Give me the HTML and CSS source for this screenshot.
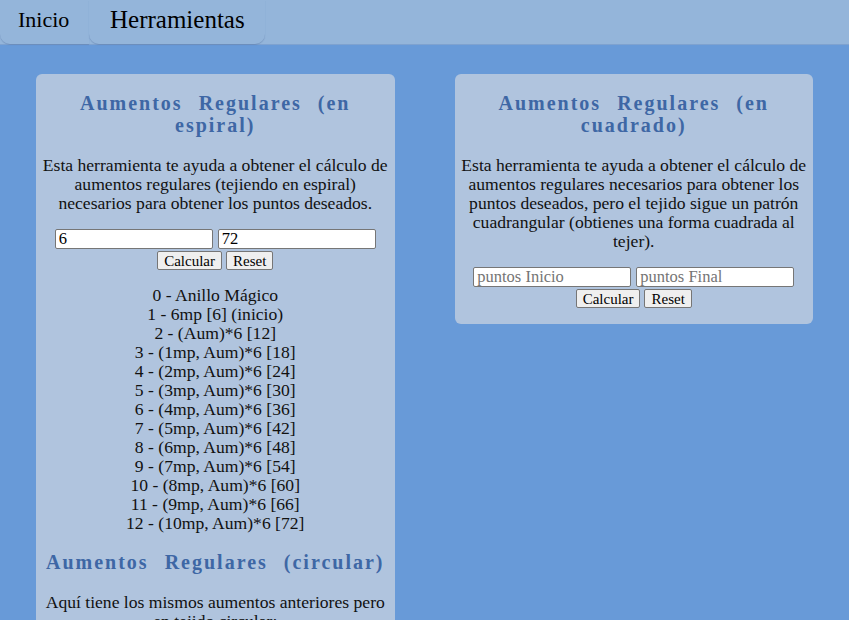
FILE: index.html
```html
<!DOCTYPE html>
<html lang="es">
<head>
<meta charset="utf-8">
<title>Herramientas</title>
<link rel="stylesheet" href="styles.css">
</head>
<body>
<nav class="tabs">
  <a class="tab tab-home" href="#">Inicio</a>
  <a class="tab tab-active" href="#">Herramientas</a>
</nav>
<main class="grid">
  <section class="card">
    <h2 class="card-title">Aumentos Regulares (en espiral)</h2>
    <p class="card-text">Esta herramienta te ayuda a obtener el cálculo de aumentos regulares (tejiendo en espiral) necesarios para obtener los puntos deseados.</p>
    <form class="calc">
      <div class="calc-inputs">
        <input class="field" type="text" value="6">
        <input class="field" type="text" value="72">
      </div>
      <div class="calc-buttons">
        <button class="btn" type="button">Calcular</button>
        <button class="btn" type="reset">Reset</button>
      </div>
    </form>
    <ul class="rows">
      <li>0 - Anillo Mágico</li>
      <li>1 - 6mp [6] (inicio)</li>
      <li>2 - (Aum)*6 [12]</li>
      <li>3 - (1mp, Aum)*6 [18]</li>
      <li>4 - (2mp, Aum)*6 [24]</li>
      <li>5 - (3mp, Aum)*6 [30]</li>
      <li>6 - (4mp, Aum)*6 [36]</li>
      <li>7 - (5mp, Aum)*6 [42]</li>
      <li>8 - (6mp, Aum)*6 [48]</li>
      <li>9 - (7mp, Aum)*6 [54]</li>
      <li>10 - (8mp, Aum)*6 [60]</li>
      <li>11 - (9mp, Aum)*6 [66]</li>
      <li>12 - (10mp, Aum)*6 [72]</li>
    </ul>
    <h2 class="card-title">Aumentos Regulares (circular)</h2>
    <p class="card-text">Aquí tiene los mismos aumentos anteriores pero en tejido circular:</p>
  </section>
  <section class="card">
    <h2 class="card-title">Aumentos Regulares (en cuadrado)</h2>
    <p class="card-text">Esta herramienta te ayuda a obtener el cálculo de aumentos regulares necesarios para obtener los puntos deseados, pero el tejido sigue un patrón cuadrangular (obtienes una forma cuadrada al tejer).</p>
    <form class="calc">
      <div class="calc-inputs">
        <input class="field" type="text" placeholder="puntos Inicio">
        <input class="field" type="text" placeholder="puntos Final">
      </div>
      <div class="calc-buttons">
        <button class="btn" type="button">Calcular</button>
        <button class="btn" type="reset">Reset</button>
      </div>
    </form>
  </section>
</main>
</body>
</html>
```
FILE: styles.css
```css
html, body {
  margin: 0;
  padding: 0;
}
body {
  background: #689ad8;
  font-family: "Liberation Serif", "DejaVu Serif", serif;
  font-size: 17.6px;
  color: #111;
  min-height: 620px;
}
.tabs {
  display: flex;
  height: 44px;
  background: #94b5da;
  border-bottom: 1px solid #7fa2cf;
}
.tab {
  display: block;
  color: #000;
  text-decoration: none;
  background: #94b5da;
  border-radius: 0 0 10px 10px;
  box-shadow: 0 1px 1px rgba(60, 90, 140, 0.3);
  height: 44px;
  box-sizing: border-box;
  white-space: nowrap;
}
.tab-home {
  font-size: 22px;
  padding: 7px 0 0 18px;
  width: 89px;
  border-radius: 0 0 0 10px;
}
.tab-active {
  font-size: 25px;
  padding: 6px 0 0 21px;
  width: 176px;
}
.grid {
  display: grid;
  grid-template-columns: 1fr 1fr;
  gap: 60px;
  padding: 29px 36px 0;
  align-items: start;
}
.card {
  background: #b0c4de;
  border-radius: 6px;
  padding: 18px 2px 16px;
  text-align: center;
}
.card-title {
  margin: 0 0 20px;
  font-size: 20px;
  line-height: 22px;
  font-weight: bold;
  color: #3e67a5;
  letter-spacing: 2px;
  word-spacing: 9px;
  padding: 0;
}
.card-text {
  margin: 0 0 16px;
  line-height: 19px;
}
.calc {
  margin: 0;
}
.calc-inputs {
  display: flex;
  justify-content: center;
  gap: 5px;
}
.field {
  width: 158px;
  height: 20px;
  box-sizing: border-box;
  border: 1px solid #767676;
  border-radius: 2px;
  background: #fff;
  font-family: inherit;
  font-size: 16.5px;
  line-height: 16px;
  padding: 0 3px;
  color: #000;
}
.field::placeholder {
  color: #757575;
}
.calc-buttons {
  display: flex;
  justify-content: center;
  gap: 4px;
  margin-top: 2px;
}
.btn {
  height: 19px;
  box-sizing: border-box;
  border: 1px solid #767676;
  border-radius: 2px;
  background: #efefef;
  font-family: inherit;
  font-size: 15px;
  padding: 0 6px;
  line-height: 16px;
  color: #000;
}
.rows {
  list-style: none;
  margin: 16px 0 18px;
  padding: 0;
  line-height: 19px;
}
```
